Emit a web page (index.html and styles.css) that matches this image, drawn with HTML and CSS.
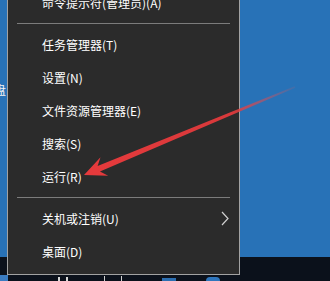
FILE: index.html
```html
<!DOCTYPE html>
<html lang="zh-CN">
<head>
<meta charset="utf-8">
<title>Win+X 菜单</title>
<link rel="stylesheet" href="styles.css">
</head>
<body>
<div class="screen">
  <div class="desktop">
    <span class="desk-label">盘</span>
  </div>
  <div class="taskbar">
    <span class="tb tb-start"></span>
    <span class="tb tb-search"></span>
    <span class="tb tb-view"></span>
    <span class="tb tb-app"></span>
    <span class="tb tb-app2"></span>
  </div>
  <div class="menu">
    <div class="item">命令提示符(管理员)(A)</div>
    <div class="sep"></div>
    <div class="item">任务管理器(T)</div>
    <div class="item">设置(N)</div>
    <div class="item">文件资源管理器(E)</div>
    <div class="item">搜索(S)</div>
    <div class="item">运行(R)</div>
    <div class="sep"></div>
    <div class="item">关机或注销(U)<svg class="chev" width="8" height="15" viewBox="0 0 8 15"><polyline points="1,1 7,7.5 1,14" fill="none" stroke="#d0d0d0" stroke-width="1.2"/></svg></div>
    <div class="item">桌面(D)</div>
  </div>
  <svg class="arrow" width="330" height="281" viewBox="0 0 330 281">
    <defs>
      <linearGradient id="ag" gradientUnits="userSpaceOnUse" x1="84" y1="175" x2="296" y2="87">
        <stop offset="0" stop-color="#e63a3c" stop-opacity="1"/>
        <stop offset="0.7" stop-color="#e63a3c" stop-opacity="0.92"/>
        <stop offset="1" stop-color="#e8585a" stop-opacity="0.1"/>
      </linearGradient>
    </defs>
    <polygon fill="url(#ag)" points="84,175 100.5,157.3 97.6,166 294.7,86.3 295.3,87.7 99.95,171.6 108.2,175.8"/>
  </svg>
</div>
</body>
</html>
```
FILE: styles.css
```css
html, body {
  margin: 0;
  padding: 0;
}
body {
  background: #2872b7;
  font-family: "Noto Sans CJK SC", "Noto Sans", sans-serif;
}
.screen {
  position: relative;
  width: 330px;
  height: 281px;
  overflow: hidden;
  display: flex;
  flex-direction: column;
}
.desktop {
  flex: 1;
  position: relative;
  background: #2872b7;
}
.desk-label {
  position: absolute;
  left: -6px;
  top: 83px;
  color: #f4f4f4;
  font-size: 12px;
  line-height: 14px;
}
.taskbar {
  height: 24px;
  background: #0b111b;
  display: flex;
  align-items: flex-end;
}
.tb {
  display: block;
  height: 6px;
}
.tb-start {
  width: 8px;
  background: #3a7cc2;
}
.tb-search {
  width: 10px;
  margin-left: 50px;
  border-left: 2px solid #d8d8d8;
  border-right: 2px solid #d8d8d8;
  height: 4px;
  box-sizing: border-box;
}
.tb-view {
  width: 18px;
  margin-left: 36px;
  border-left: 1px solid #cfcfcf;
  border-right: 1px solid #cfcfcf;
  height: 5px;
  box-sizing: border-box;
}
.tb-app {
  width: 14px;
  margin-left: 40px;
  background: #2c6fb2;
  height: 3px;
}
.tb-app2 {
  width: 14px;
  margin-left: 30px;
  background: #2f76bd;
  height: 4px;
  border-radius: 6px 6px 0 0;
}
.menu {
  position: absolute;
  left: 7px;
  top: -15px;
  width: 233px;
  box-sizing: border-box;
  border: 1px solid #a2a2a2;
  background: #2b2b2b;
  padding-bottom: 6px;
}
.item {
  height: 33px;
  display: flex;
  align-items: center;
  padding-left: 34px;
  padding-right: 10px;
  color: #ffffff;
  font-size: 12px;
  line-height: 1;
  white-space: nowrap;
}
.chev {
  margin-left: auto;
}
.sep {
  height: 1px;
  margin: 4px 9px;
  background: #7c7c7c;
}
.arrow {
  position: absolute;
  left: 0;
  top: 0;
  pointer-events: none;
}
```
